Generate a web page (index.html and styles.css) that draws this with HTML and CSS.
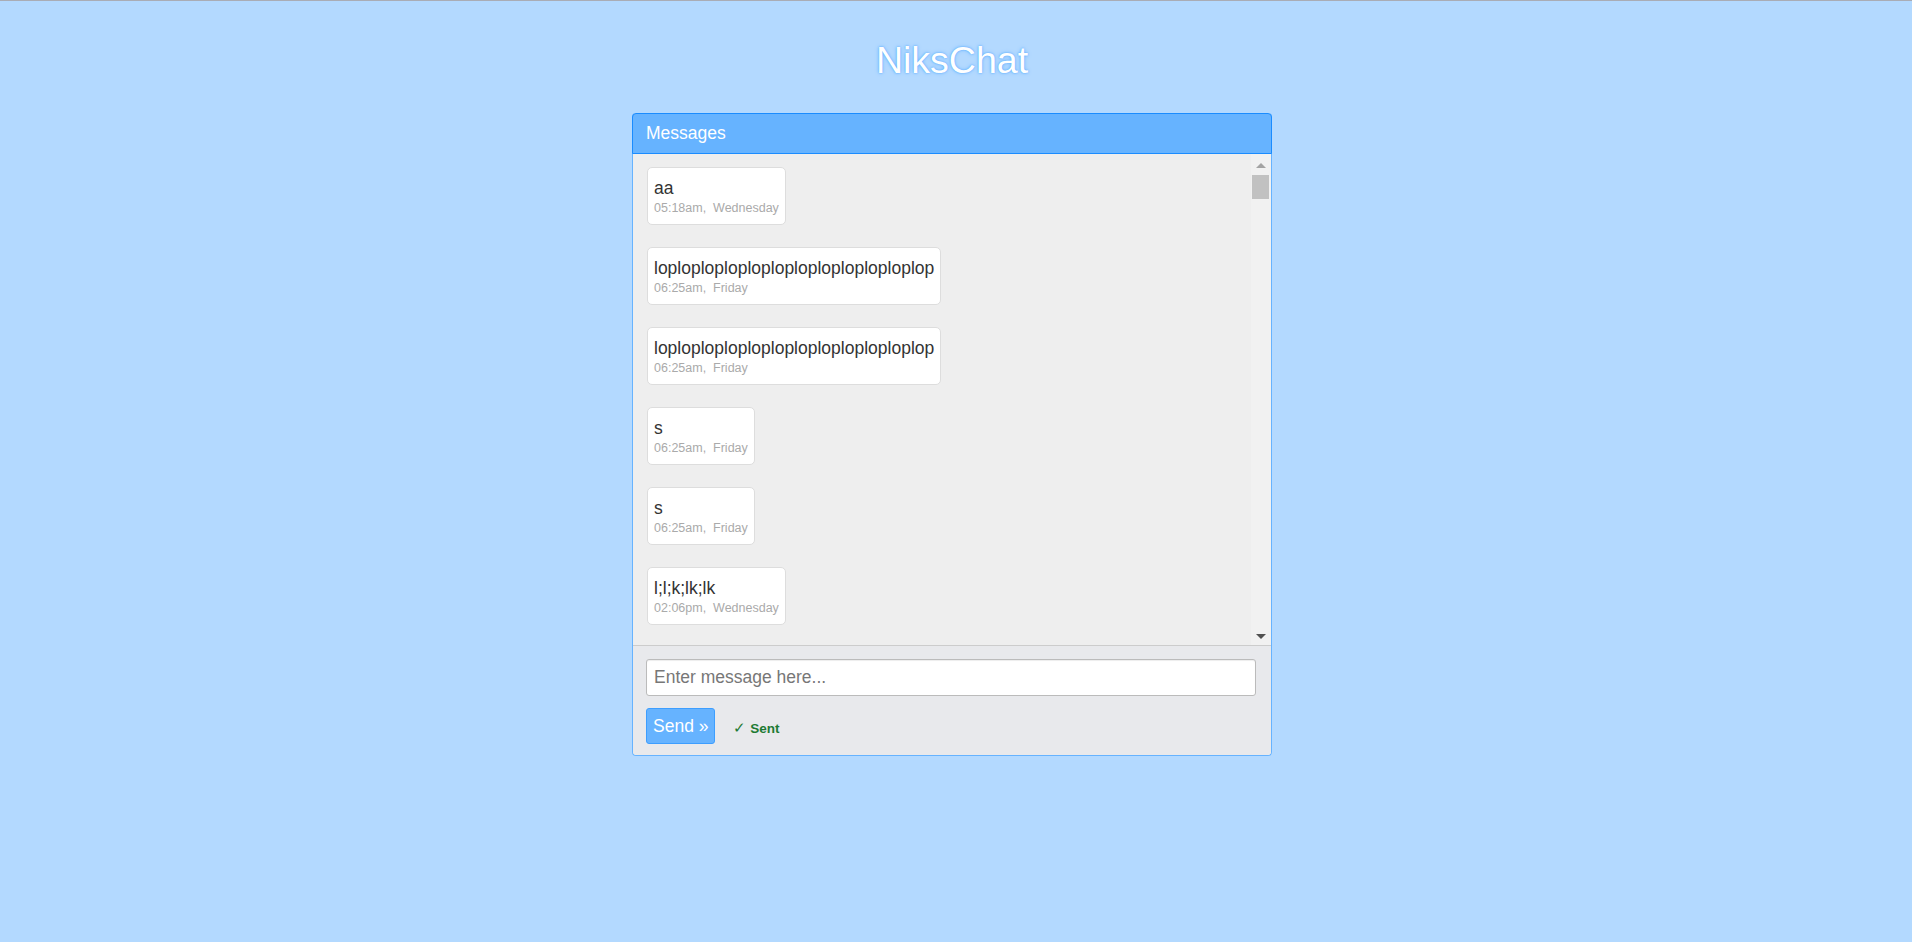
FILE: index.html
```html
<!DOCTYPE html>
<html lang="en">
<head>
<meta charset="utf-8">
<title>NiksChat</title>
<link rel="stylesheet" href="styles.css">
</head>
<body>
<div class="page">
  <h1 class="title">NiksChat</h1>
  <div class="panel">
    <div class="panel-heading">Messages</div>
    <div class="panel-body">
      <div class="messages">
        <div class="msg"><div class="msg-text">aa</div><div class="msg-time">05:18am,&nbsp; Wednesday</div></div>
        <div class="msg"><div class="msg-text">loploploploploploploploploploploplop</div><div class="msg-time">06:25am,&nbsp; Friday</div></div>
        <div class="msg"><div class="msg-text">loploploploploploploploploploploplop</div><div class="msg-time">06:25am,&nbsp; Friday</div></div>
        <div class="msg"><div class="msg-text">s</div><div class="msg-time">06:25am,&nbsp; Friday</div></div>
        <div class="msg"><div class="msg-text">s</div><div class="msg-time">06:25am,&nbsp; Friday</div></div>
        <div class="msg"><div class="msg-text">l;l;k;lk;lk</div><div class="msg-time">02:06pm,&nbsp; Wednesday</div></div>
      </div>
      <div class="scrollbar">
        <div class="sb-btn"><span class="arrow-up"></span></div>
        <div class="sb-track"><div class="sb-thumb"></div></div>
        <div class="sb-btn"><span class="arrow-down"></span></div>
      </div>
    </div>
    <div class="panel-footer">
      <input class="msg-input" type="text" placeholder="Enter message here...">
      <div class="actions">
        <button class="btn-send" type="button">Send &raquo;</button>
        <span class="status"><span class="check">&#10003;</span> Sent</span>
      </div>
    </div>
  </div>
</div>
</body>
</html>
```
FILE: styles.css
```css
html, body {
  margin: 0;
  padding: 0;
  background: #b3d9ff;
  height: 100%;
}

body {
  font-family: "Liberation Sans", Arial, sans-serif;
  color: #333;
}

.page {
  border-top: 1px solid #a9acb5;
  padding-right: 8px;
  min-height: 941px;
  box-sizing: border-box;
}

.title {
  margin: 0 0 33px;
  padding-top: 39px;
  font-size: 37.5px;
  line-height: 40px;
  font-weight: normal;
  text-align: center;
  color: #ffffff;
  text-shadow: 0 0 2px #4da6ff, 0 0 4px #80bfff;
}

.panel {
  width: 640px;
  margin: 0 auto;
  border: 1px solid #66b3ff;
  border-top: 0;
  border-radius: 4px;
  box-sizing: border-box;
  background: #eeeeee;
}

.panel-heading {
  margin: 0 -1px;
  border: 1px solid #1a8cff;
  border-radius: 4px 4px 0 0;
  background: #66b3ff;
  color: #ffffff;
  font-size: 17.5px;
  line-height: 22px;
  padding: 8px 13px 9px;
}

.panel-body {
  display: flex;
  height: 491px;
  border-bottom: 1px solid #cccccc;
  background: #eeeeee;
}

.messages {
  flex: 1;
  overflow: hidden;
  padding: 13px 14px;
  display: flex;
  flex-direction: column;
  align-items: flex-start;
}

.msg {
  background: #ffffff;
  border: 1px solid #dddddd;
  border-radius: 5px;
  padding: 8px 6px 8px;
  margin-bottom: 22px;
  flex-shrink: 0;
}

.msg-text {
  font-size: 17.5px;
  line-height: 25px;
  color: #333333;
  white-space: nowrap;
}

.msg-time {
  font-size: 12.5px;
  line-height: 15px;
  color: #aaaaaa;
  white-space: nowrap;
}

.scrollbar {
  width: 20px;
  background: #f1f1f1;
  display: flex;
  flex-direction: column;
}

.sb-btn {
  height: 20px;
  display: flex;
  align-items: center;
  justify-content: center;
  flex-shrink: 0;
}

.arrow-up {
  width: 0;
  height: 0;
  border-left: 5px solid transparent;
  border-right: 5px solid transparent;
  border-bottom: 5px solid #a3a3a3;
  margin-top: 2px;
}

.arrow-down {
  width: 0;
  height: 0;
  border-left: 5px solid transparent;
  border-right: 5px solid transparent;
  border-top: 5px solid #505050;
  margin-top: 2px;
}

.sb-track {
  flex: 1;
}

.sb-thumb {
  margin: 1px 2px 0 1px;
  height: 24px;
  background: #c1c1c1;
}

.panel-footer {
  background: #e8e9ec;
  border-radius: 0 0 4px 4px;
  padding: 13px 15px 11px 13px;
}

.msg-input {
  display: block;
  width: 100%;
  height: 37px;
  box-sizing: border-box;
  margin: 0 0 12px;
  padding: 6px 7px;
  border: 1px solid #bbbbbb;
  border-radius: 3px;
  background: #ffffff;
  box-shadow: inset 0 1px 1px rgba(0, 0, 0, 0.075);
  font-family: "Liberation Sans", Arial, sans-serif;
  font-size: 17.5px;
  line-height: 23px;
  color: #555555;
  outline: none;
}

.msg-input::placeholder {
  color: #777777;
}

.actions {
  display: flex;
  align-items: center;
  height: 36px;
}

.btn-send {
  height: 36px;
  padding: 0 6px;
  border: 1px solid #3d9eff;
  border-radius: 3px;
  background: #66b3ff;
  color: #ffffff;
  font-family: "Liberation Sans", Arial, sans-serif;
  font-size: 17.5px;
  line-height: 34px;
  cursor: pointer;
}

.status {
  margin-left: 18px;
  padding-top: 4px;
  font-size: 13.5px;
  line-height: 18px;
  font-weight: bold;
  color: #1e7b34;
}

.check {
  font-weight: normal;
  font-size: 15px;
}
```
